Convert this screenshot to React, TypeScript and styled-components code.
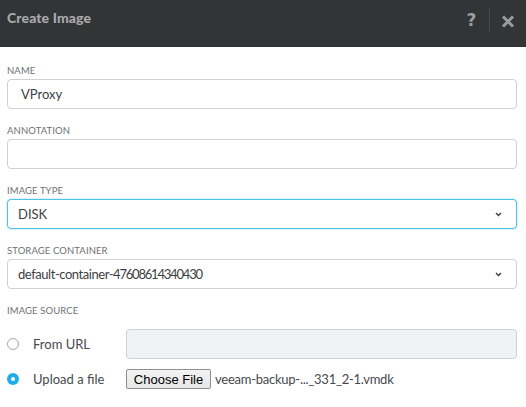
import React from "react";
import styled, { createGlobalStyle } from "styled-components";

const Global = createGlobalStyle`
  html, body {
    margin: 0;
    padding: 0;
    background: #ffffff;
  }
  body {
    font-family: Lato, "Open Sans", "Liberation Sans", sans-serif;
    -webkit-font-smoothing: antialiased;
  }
  * { box-sizing: border-box; }
`;

const Dialog = styled.div`
  width: 526px;
  display: flex;
  flex-direction: column;
  background: #fff;
`;

const Header = styled.header`
  height: 47px;
  background: #323436;
  display: flex;
  align-items: flex-start;
  padding: 9px 0 0 7px;
`;

const Title = styled.h1`
  flex: 1;
  margin: 0;
  font-size: 14px;
  line-height: 18px;
  font-weight: 900;
  color: #a8a9aa;
  letter-spacing: 0.1px;
`;

const HeaderActions = styled.div`
  display: flex;
  align-items: flex-start;
  height: 24px;
  margin-top: -1px;
`;

const HelpButton = styled.span`
  width: 30px;
  padding-right: 5px;
  text-align: center;
  font-size: 17px;
  line-height: 24px;
  font-weight: 900;
  color: #9c9d9e;
  font-family: "DejaVu Sans", sans-serif;
`;

const Divider = styled.span`
  width: 1px;
  height: 24px;
  background: #45474a;
`;

const CloseButton = styled.span`
  width: 36px;
  height: 24px;
  display: flex;
  align-items: center;
  justify-content: center;
  padding-top: 2px;
`;

const Body = styled.div`
  display: flex;
  flex-direction: column;
  gap: 16px;
  padding: 18px 9px 0 7px;
`;

const Field = styled.div<{ $gap?: number }>`
  display: flex;
  flex-direction: column;
  gap: ${(p) => p.$gap ?? 2}px;
`;

const Label = styled.label`
  display: block;
  height: 12px;
  line-height: 12px;
  font-size: 9.5px;
  color: #6e7173;
  text-transform: uppercase;
  letter-spacing: 0.1px;
`;

const Box = styled.div<{ $focus?: boolean; $disabled?: boolean; $pad?: number }>`
  height: 30px;
  display: flex;
  align-items: center;
  padding: 0 14px 0 ${(p) => p.$pad ?? 10}px;
  border: 1px solid ${(p) => (p.$focus ? "#4fc2ec" : "#cfd1d3")};
  border-radius: 4px;
  background: ${(p) => (p.$disabled ? "#f1f2f3" : "#fff")};
  box-shadow: ${(p) => (p.$focus ? "0 0 2px rgba(79,194,236,0.6)" : "none")};
  font-size: 13px;
  color: #3d4042;
`;

const Value = styled.span<{ $tight?: boolean }>`
  flex: 1;
  letter-spacing: ${(p) => (p.$tight ? "-0.45px" : "0")};
`;

/* Container ids use condensed figures */
const Digits = styled.span`
  letter-spacing: -1.2px;
`;

const Chevron = () => (
  <svg width="7" height="5" viewBox="0 0 7 5">
    <path d="M1 1 L3.5 3.5 L6 1" fill="none" stroke="#3a3d40" strokeWidth="1.4" />
  </svg>
);

const SourceList = styled.div`
  display: flex;
  flex-direction: column;
  gap: 10px;
`;

const SourceRow = styled.div`
  display: grid;
  grid-template-columns: 119px 1fr;
  align-items: center;
`;

const RadioLabel = styled.div`
  display: flex;
  align-items: center;
  gap: 14px;
  font-size: 13px;
  color: #464a4c;
`;

const Radio = styled.span<{ $checked?: boolean }>`
  width: 12px;
  height: 12px;
  border-radius: 50%;
  border: ${(p) => (p.$checked ? "none" : "1px solid #a5a8ab")};
  background: ${(p) => (p.$checked ? "#20aeea" : "#fff")};
  display: flex;
  align-items: center;
  justify-content: center;
  &::after {
    content: "";
    width: 4px;
    height: 4px;
    border-radius: 50%;
    background: #fff;
    display: ${(p) => (p.$checked ? "block" : "none")};
  }
`;

const FilePicker = styled.div`
  display: flex;
  align-items: center;
  gap: 4px;
  height: 20px;
`;

const ChooseButton = styled.button`
  height: 20px;
  width: 85px;
  padding: 0;
  font-family: "Liberation Sans", Arial, sans-serif;
  font-size: 13px;
  color: #000;
  background: linear-gradient(#f3f3f3, #e6e6e6);
  border: 1px solid #8f8f8f;
  border-radius: 2px;
`;

const FileName = styled.span`
  font-size: 13px;
  letter-spacing: -0.25px;
  color: #464a4c;
`;

export default function App() {
  return (
    <>
      <Global />
      <Dialog>
        <Header>
          <Title>Create Image</Title>
          <HeaderActions>
            <HelpButton>?</HelpButton>
            <Divider />
            <CloseButton>
              <svg width="14" height="13" viewBox="0 0 14 13">
                <path d="M2 1.5 L12 11.5 M12 1.5 L2 11.5" stroke="#9c9d9e" strokeWidth="3" strokeLinecap="butt" />
              </svg>
            </CloseButton>
          </HeaderActions>
        </Header>
        <Body>
          <Field>
            <Label>Name</Label>
            <Box $pad={13}>
              <Value>VProxy</Value>
            </Box>
          </Field>
          <Field>
            <Label>Annotation</Label>
            <Box />
          </Field>
          <Field>
            <Label>Image Type</Label>
            <Box $focus>
              <Value>DISK</Value>
              <Chevron />
            </Box>
          </Field>
          <Field>
            <Label>Storage Container</Label>
            <Box>
              <Value $tight>
                default-container-<Digits>47608614340430</Digits>
              </Value>
              <Chevron />
            </Box>
          </Field>
          <Field $gap={12}>
            <Label>Image Source</Label>
            <SourceList>
              <SourceRow>
                <RadioLabel>
                  <Radio />
                  From URL
                </RadioLabel>
                <Box $disabled />
              </SourceRow>
              <SourceRow>
                <RadioLabel>
                  <Radio $checked />
                  Upload a file
                </RadioLabel>
                <FilePicker>
                  <ChooseButton>Choose File</ChooseButton>
                  <FileName>veeam-backup-..._331_2-1.vmdk</FileName>
                </FilePicker>
              </SourceRow>
            </SourceList>
          </Field>
        </Body>
      </Dialog>
    </>
  );
}
